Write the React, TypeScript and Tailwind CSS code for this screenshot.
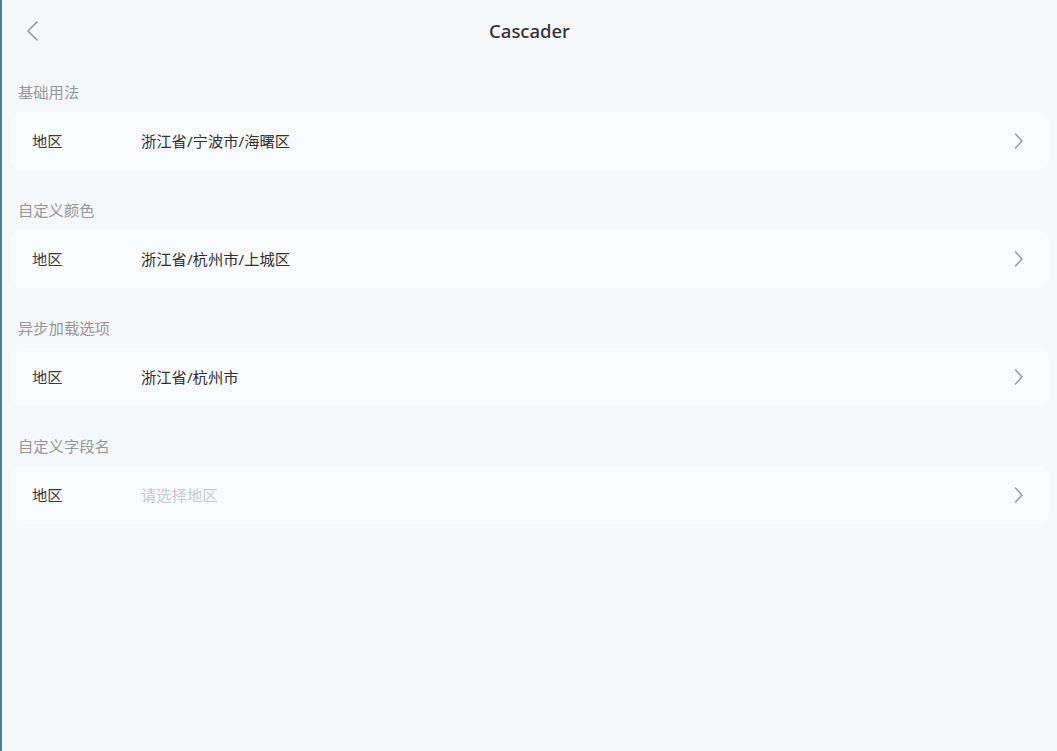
import React from 'react';

const font = { fontFamily: '"Noto Sans", "Noto Sans CJK SC", sans-serif' };

interface Section {
  title: string;
  value: string;
  placeholder?: boolean;
}

const sections: Section[] = [
  { title: '基础用法', value: '浙江省/宁波市/海曙区' },
  { title: '自定义颜色', value: '浙江省/杭州市/上城区' },
  { title: '异步加载选项', value: '浙江省/杭州市' },
  { title: '自定义字段名', value: '请选择地区', placeholder: true },
];

function ArrowRight() {
  return (
    <svg width="9" height="16" viewBox="0 0 9 16" fill="none" stroke="#969799" strokeWidth={1.4} strokeLinecap="round" strokeLinejoin="round">
      <path d="M1.5 1L8 8l-6.5 7" />
    </svg>
  );
}

export default function App() {
  return (
    <div className="min-h-[751px] w-full bg-[#f7f8fa] border-l-2 border-[#4b7eab]" style={font}>
      {/* nav bar */}
      <div className="relative h-[62px] flex items-center justify-center">
        <button className="absolute left-[24px] top-[21px]">
          <svg width="14" height="20" viewBox="0 0 14 20" fill="none" stroke="#969799" strokeWidth={1.6} strokeLinecap="round" strokeLinejoin="round">
            <path d="M11 1L2 10l9 9" />
          </svg>
        </button>
        <h1 className="text-[18.5px] font-medium text-[#323233]">Cascader</h1>
      </div>

      {sections.map((s) => (
        <div key={s.title} className="pt-[20px] pb-[10px]">
          <div className="h-[20px] leading-[20px] pl-[16px] text-[15.3px] text-[#969799]">{s.title}</div>
          <div className="mt-[10px] mx-[8px] h-[58px] rounded-[12px] bg-[#fafbfc] flex items-center pl-[22px] pr-[26px] text-[15.3px]">
            <span className="w-[109px] text-[#3a3a3c]">地区</span>
            <span className={`flex-1 ${s.placeholder ? 'text-[#c8c9cc]' : 'text-[#323233]'}`}>{s.value}</span>
            <ArrowRight />
          </div>
        </div>
      ))}
    </div>
  );
}
